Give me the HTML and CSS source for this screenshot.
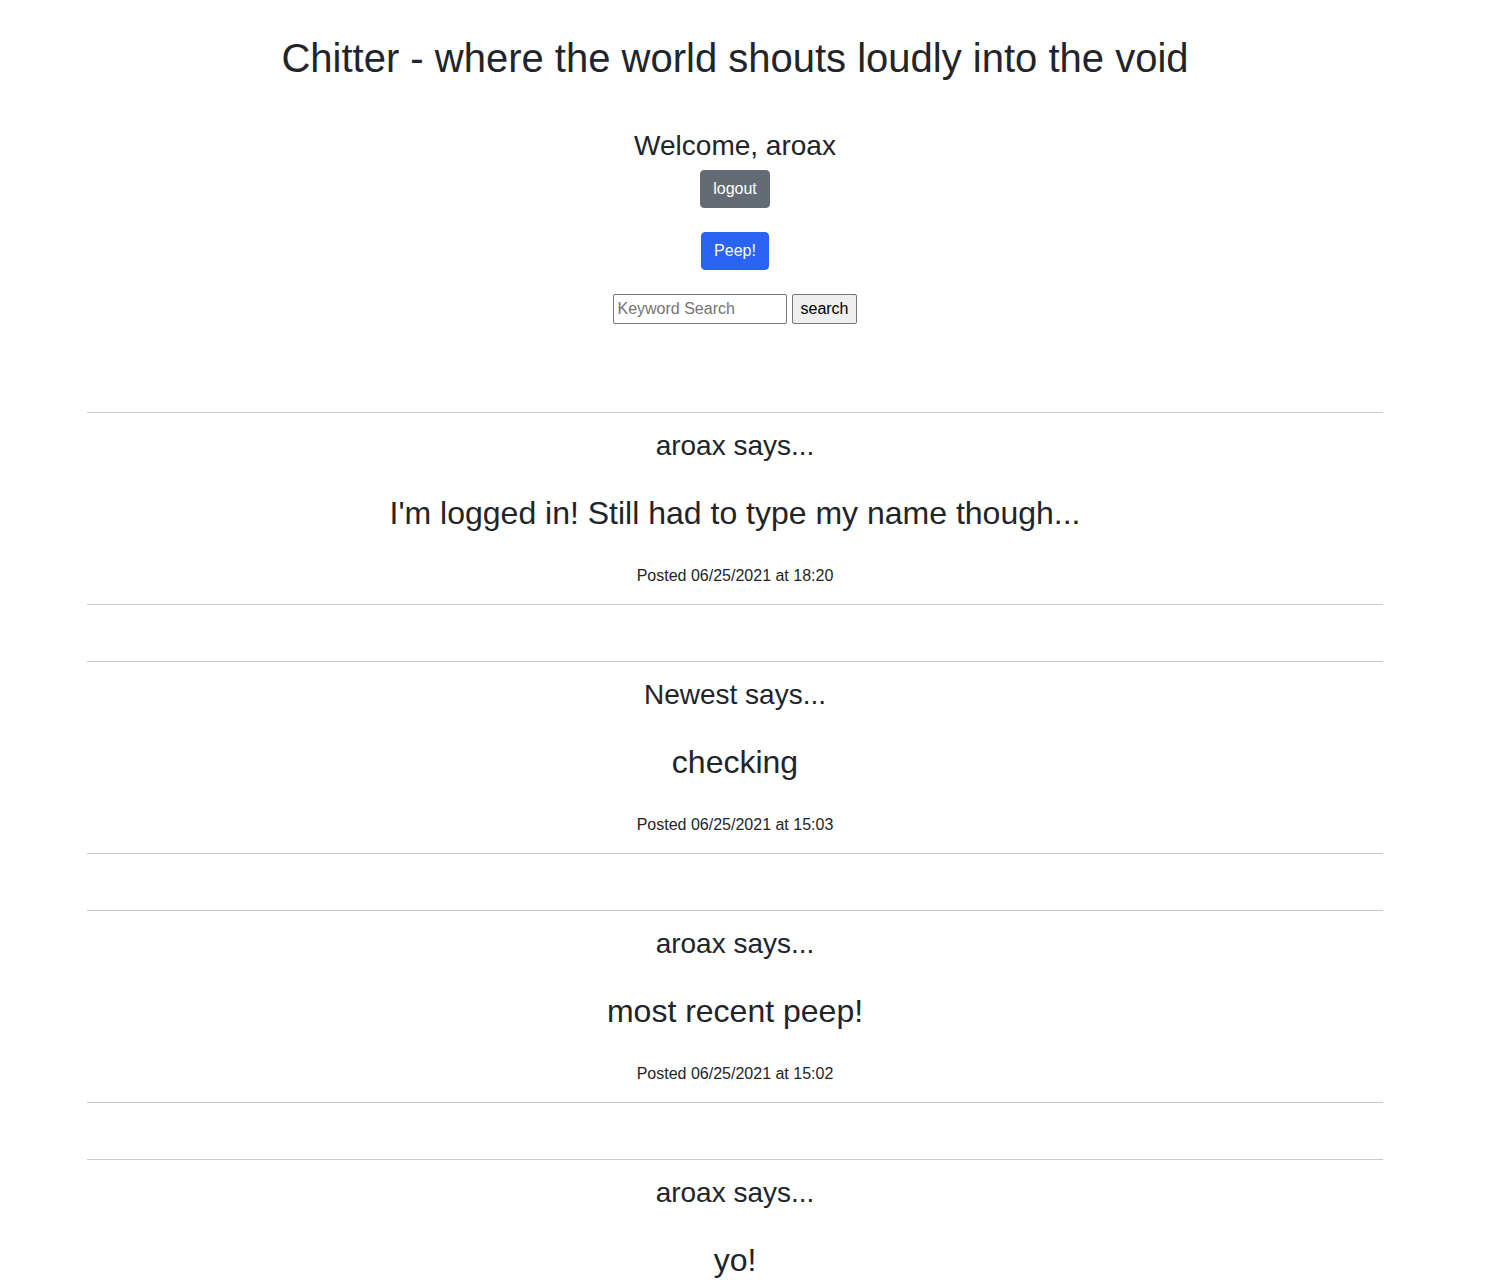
FILE: index.html
```html
<!DOCTYPE html>
<html lang="en">
<head>
<meta charset="utf-8">
<title>Chitter</title>
<link rel="stylesheet" href="styles.css">
</head>
<body>
<div class="page">
  <div class="container">
    <header class="header">
      <h1 class="title">Chitter - where the world shouts loudly into the void</h1>
      <h3 class="welcome">Welcome, aroax</h3>
      <form class="action-form">
        <button type="button" class="btn btn-secondary">logout</button>
      </form>
      <form class="action-form">
        <button type="button" class="btn btn-primary">Peep!</button>
      </form>
      <form class="search-form">
        <input class="search-input" type="text" placeholder="Keyword Search">
        <button type="button" class="search-btn">search</button>
      </form>
    </header>

    <main class="posts">
      <article class="post">
        <h3 class="post-author">aroax says...</h3>
        <h2 class="post-body">I'm logged in! Still had to type my name though...</h2>
        <p class="post-date">Posted 06/25/2021 at 18:20</p>
      </article>
      <article class="post">
        <h3 class="post-author">Newest says...</h3>
        <h2 class="post-body">checking</h2>
        <p class="post-date">Posted 06/25/2021 at 15:03</p>
      </article>
      <article class="post">
        <h3 class="post-author">aroax says...</h3>
        <h2 class="post-body">most recent peep!</h2>
        <p class="post-date">Posted 06/25/2021 at 15:02</p>
      </article>
      <article class="post">
        <h3 class="post-author">aroax says...</h3>
        <h2 class="post-body">yo!</h2>
      </article>
    </main>
  </div>
</div>
</body>
</html>
```

FILE: styles.css
```css
html, body {
  margin: 0;
  padding: 0;
  background: #ffffff;
}

body {
  font-family: "Liberation Sans", Arial, Helvetica, sans-serif;
  font-size: 16px;
  line-height: 1.5;
  color: #212529;
}

.page {
  width: 1470px;
}

.container {
  max-width: 1296px;
  margin: 0 auto;
  text-align: center;
}

.header {
  display: flex;
  flex-direction: column;
  align-items: center;
  padding-top: 34px;
}

.title {
  margin: 0 0 47px;
  font-size: 40px;
  line-height: 48px;
  font-weight: 400;
}

.welcome {
  margin: 0 0 7px;
  font-size: 28px;
  line-height: 34px;
  font-weight: 400;
}

.action-form {
  margin: 0 0 24px;
}

.btn {
  display: inline-block;
  padding: 6px 12px;
  font-family: inherit;
  font-size: 16px;
  line-height: 24px;
  color: #ffffff;
  border: 1px solid transparent;
  border-radius: 4px;
  cursor: pointer;
}

.btn-secondary {
  background: #636b74;
  border-color: #636b74;
}

.btn-primary {
  background: #2b63f6;
  border-color: #2b63f6;
}

.search-form {
  display: flex;
  gap: 5px;
  margin: 0 0 88px;
}

.search-input {
  box-sizing: border-box;
  width: 174px;
  height: 30px;
  margin: 0;
  padding: 2px 3px;
  font-family: inherit;
  font-size: 16px;
  line-height: 24px;
  color: #000000;
  border: 1px solid #767676;
  border-radius: 2px;
  background: #ffffff;
}

.search-input::placeholder {
  color: #757575;
}

.search-btn {
  box-sizing: border-box;
  height: 30px;
  margin: 0;
  padding: 2px 7px;
  font-family: inherit;
  font-size: 16px;
  line-height: 24px;
  color: #000000;
  background: #efefef;
  border: 1px solid #767676;
  border-radius: 2px;
}

.posts {
  display: flex;
  flex-direction: column;
  gap: 56px;
}

.post {
  padding: 16px 0;
  border-top: 1px solid #c8c9ca;
  border-bottom: 1px solid #c8c9ca;
}

.post-author {
  margin: 0 0 31px;
  font-size: 28px;
  line-height: 34px;
  font-weight: 400;
}

.post-body {
  margin: 0 0 32px;
  font-size: 32px;
  line-height: 38px;
  font-weight: 400;
}

.post-date {
  margin: 0;
  font-size: 16px;
  line-height: 24px;
  color: #212529;
}
```
